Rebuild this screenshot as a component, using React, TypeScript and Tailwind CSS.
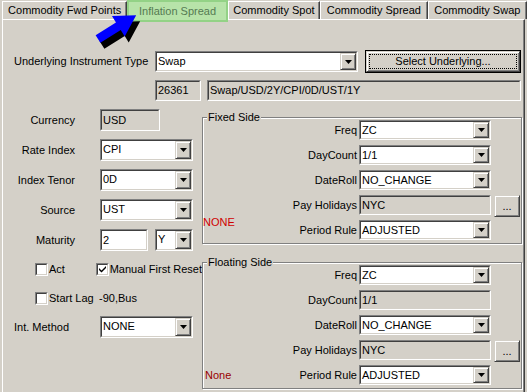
import React from "react";

// classic win32 bevels
const sunkenOuter = "border border-t-[#808080] border-l-[#808080] border-b-white border-r-white";
const sunkenInner = "border border-t-[#404040] border-l-[#404040] border-b-[#d4d0c8] border-r-[#d4d0c8]";
const raised =
  "border border-t-[#d4d0c8] border-l-[#d4d0c8] border-b-[#404040] border-r-[#404040] shadow-[inset_1px_1px_0_#ffffff,inset_-1px_-1px_0_#808080]";

function DownArrow() {
  return (
    <svg width="7" height="4" viewBox="0 0 7 4">
      <path d="M0 0h7L3.5 4z" fill="#000" />
    </svg>
  );
}

function Combo({ value, className }: { value: string; className?: string }) {
  return (
    <div className={`${sunkenOuter} ${className ?? ""}`}>
      <div className={`${sunkenInner} flex h-full bg-white`}>
        <span className="flex-1 truncate pl-[1px] leading-[16px]">{value}</span>
        <div className={`${raised} flex w-[16px] items-center justify-center bg-[#d4d0c8]`}>
          <DownArrow />
        </div>
      </div>
    </div>
  );
}

function Field({ value, className, white }: { value: string; className?: string; white?: boolean }) {
  return (
    <div className={`${sunkenOuter} ${className ?? ""}`}>
      <div className={`${sunkenInner} flex h-full items-center ${white ? "bg-white" : "bg-[#d4d0c8]"}`}>
        <span className="pl-[1px]">{value}</span>
      </div>
    </div>
  );
}

function Check({ checked }: { checked?: boolean }) {
  return (
    <div className={`${sunkenOuter} h-[13px] w-[13px]`}>
      <div className={`${sunkenInner} flex h-full items-center justify-center bg-white`}>
        {checked && (
          <svg width="7" height="7" viewBox="0 0 7 7">
            <path d="M0 2l2.5 2.5L7 0v2L2.5 6.5 0 4z" fill="#000" />
          </svg>
        )}
      </div>
    </div>
  );
}

function Tab({ label, width, selected }: { label: string; width: string; selected?: boolean }) {
  if (selected) {
    return (
      <div
        className={`${width} flex h-[22px] items-start justify-center border-2 border-[#93d286] bg-[#b7e3a9] pt-[1px] text-[#557a52]`}
      >
        {label}
      </div>
    );
  }
  return (
    <div
      className={`${width} mt-[1px] flex h-[18px] items-center justify-center border-t border-l border-r border-t-white border-l-white border-r-[#404040] shadow-[inset_-1px_0_0_#808080]`}
    >
      {label}
    </div>
  );
}

function SideRow({
  label,
  children,
  note,
  noteClass,
  extra,
}: {
  label: string;
  children: React.ReactNode;
  note?: string;
  noteClass?: string;
  extra?: boolean;
}) {
  return (
    <div className="flex h-[20px] items-start">
      <div className="flex h-[20px] w-[156px] items-center justify-between pr-[2px]">
        <span className={noteClass}>{note}</span>
        <span>{label}</span>
      </div>
      {children}
      {extra && (
        <div className={`${raised} ml-[3px] flex h-[22px] w-[26px] items-center justify-center bg-[#d4d0c8]`}>
          ...
        </div>
      )}
    </div>
  );
}

function GroupBox({ title, className, children }: { title: string; className?: string; children: React.ReactNode }) {
  return (
    <div
      className={`relative h-[127px] w-[320px] border border-[#808080] shadow-[inset_1px_1px_0_#ffffff,1px_1px_0_#ffffff] ${className ?? ""}`}
    >
      <span className="absolute -top-[7px] left-[4px] bg-[#d4d0c8] px-[1px] leading-[13px]">{title}</span>
      <div className="flex flex-col gap-[5px] pt-[2px]">{children}</div>
    </div>
  );
}

export default function App() {
  return (
    <div className="relative h-[392px] w-[527px] overflow-hidden bg-[#d4d0c8] font-['Liberation_Sans',Arial,sans-serif] text-[11px] text-black">
      <div className="relative z-10 flex h-[19px] items-start pl-[2px]">
        <Tab label="Commodity Fwd Points" width="w-[126px]" />
        <Tab label="Inflation Spread" width="w-[101px]" selected />
        <Tab label="Commodity Spot" width="w-[93px]" />
        <Tab label="Commodity Spread" width="w-[108px]" />
        <Tab label="Commodity Swap" width="w-[100px]" />
      </div>

      <div className="mx-[2px] h-[373px] border-t border-l border-r border-t-white border-l-white border-r-[#404040] shadow-[inset_-1px_0_0_#808080]">
        {/* underlying */}
        <div className="mt-[30px] flex h-[23px] items-center">
          <span className="w-[152px] pl-[11px]">Underlying Instrument Type</span>
          <Combo value="Swap" className="h-[21px] w-[203px]" />
          <div className="ml-[7px] h-[23px] w-[156px] border border-black">
            <div className={`${raised} flex h-full items-center justify-center bg-[#d4d0c8] p-[2px]`}>
              <div className="flex h-full w-full items-center justify-center border border-dotted border-black">
                Select Underlying...
              </div>
            </div>
          </div>
        </div>
        <div className="mt-[7px] flex h-[21px] pl-[152px]">
          <Field value="26361" className="w-[46px]" />
          <Field value="Swap/USD/2Y/CPI/0D/UST/1Y" className="ml-[6px] w-[314px]" />
        </div>

        <div className="flex">
          {/* left column */}
          <div className="flex w-[199px] flex-col">
            <div className="mt-[8px] flex h-[22px] items-center">
              <span className="w-[72px] text-right">Currency</span>
              <Field value="USD" className="ml-[25px] h-[22px] w-[60px]" />
            </div>
            <div className="mt-[8px] flex h-[22px] items-center">
              <span className="w-[72px] text-right">Rate Index</span>
              <Combo value="CPI" className="ml-[25px] h-[22px] w-[93px]" />
            </div>
            <div className="mt-[8px] flex h-[22px] items-center">
              <span className="w-[72px] text-right">Index Tenor</span>
              <Combo value="0D" className="ml-[25px] h-[22px] w-[93px]" />
            </div>
            <div className="mt-[8px] flex h-[22px] items-center">
              <span className="w-[72px] text-right">Source</span>
              <Combo value="UST" className="ml-[25px] h-[22px] w-[93px]" />
            </div>
            <div className="mt-[8px] flex h-[22px] items-center">
              <span className="w-[72px] text-right">Maturity</span>
              <Field value="2" white className="ml-[25px] h-[22px] w-[48px]" />
              <Combo value="Y" className="ml-[7px] h-[22px] w-[38px]" />
            </div>
            <div className="mt-[12px] flex h-[13px] items-center pl-[32px]">
              <div className="flex w-[65px] items-center">
                <Check />
                <span className="ml-[1px]">Act</span>
              </div>
              <Check checked />
              <span className="ml-[1px] whitespace-nowrap">Manual First Reset</span>
            </div>
            <div className="mt-[16px] flex h-[13px] items-center pl-[32px]">
              <div className="flex w-[64px] items-center">
                <Check />
                <span className="ml-[1px]">Start Lag</span>
              </div>
              <span>-90,Bus</span>
            </div>
            <div className="mt-[11px] flex h-[22px] items-center">
              <span className="w-[97px] pl-[11px]">Int. Method</span>
              <Combo value="NONE" className="h-[22px] w-[93px]" />
            </div>
          </div>

          {/* right column */}
          <div className="flex flex-col">
            <GroupBox title="Fixed Side" className="mt-[16px]">
              <SideRow label="Freq">
                <Combo value="ZC" className="h-[20px] w-[132px]" />
              </SideRow>
              <SideRow label="DayCount">
                <Combo value="1/1" className="h-[20px] w-[132px]" />
              </SideRow>
              <SideRow label="DateRoll">
                <Combo value="NO_CHANGE" className="h-[20px] w-[132px]" />
              </SideRow>
              <SideRow label="Pay Holidays" extra>
                <Field value="NYC" className="h-[20px] w-[132px]" />
              </SideRow>
              <SideRow label="Period Rule" note="NONE" noteClass="mb-[16px] text-[#d00000]">
                <Combo value="ADJUSTED" className="h-[20px] w-[132px]" />
              </SideRow>
            </GroupBox>
            <GroupBox title="Floating Side" className="mt-[18px]">
              <SideRow label="Freq">
                <Combo value="ZC" className="h-[20px] w-[132px]" />
              </SideRow>
              <SideRow label="DayCount">
                <Field value="1/1" className="h-[20px] w-[132px]" />
              </SideRow>
              <SideRow label="DateRoll">
                <Combo value="NO_CHANGE" className="h-[20px] w-[132px]" />
              </SideRow>
              <SideRow label="Pay Holidays" extra>
                <Field value="NYC" className="h-[20px] w-[132px]" />
              </SideRow>
              <SideRow label="Period Rule" note="None" noteClass="pl-[2px] text-[#990000]">
                <Combo value="ADJUSTED" className="h-[20px] w-[132px]" />
              </SideRow>
            </GroupBox>
          </div>
        </div>
      </div>

      {/* pointer arrow over the selected tab */}
      <svg className="absolute left-0 top-0 z-20" width="150" height="50" viewBox="0 0 150 50">
        <g transform="translate(102 45) rotate(-32)">
          <polygon points="0,-4.5 24,-4.5 24,-12 45,0 24,12 24,4.5 0,4.5" fill="#000" />
        </g>
        <g transform="translate(98 39) rotate(-32)">
          <polygon points="0,-4.5 24,-4.5 24,-12 45,0 24,12 24,4.5 0,4.5" fill="#0000ff" />
        </g>
      </svg>
    </div>
  );
}
